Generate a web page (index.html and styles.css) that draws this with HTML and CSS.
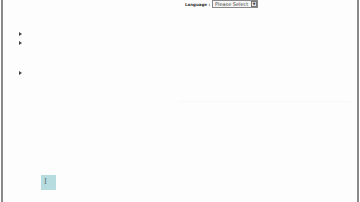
FILE: index.html
```html
<!DOCTYPE html>
<html lang="en">
  <head>
    <meta charset="UTF-8" />
    <meta name="viewport" content="width=device-width, initial-scale=1.0" />
    <title>Home</title>
    <link rel="stylesheet" href="styles.css">
  </head>
  <body>
    <div class="page">
      <div class="topbar">
        <label for="lang">Language :</label>
        <div class="select-wrap">
          <select id="lang">
            <option>Please Select</option>
          </select>
          <span class="arrow">&#9660;</span>
        </div>
      </div>
      <div class="content">
        <ul class="links">
          <li></li>
          <li></li>
        </ul>
        <ul class="links second">
          <li></li>
        </ul>
        <div class="rule"></div>
      </div>
      <div class="footer">
        <div class="cursor-box">I</div>
      </div>
    </div>
  </body>
</html>
```

FILE: styles.css
```css
* {
  margin: 0;
  padding: 0;
  box-sizing: border-box;
}

body {
  font-family: Verdana, "DejaVu Sans", sans-serif;
  background-color: #ffffff;
  width: 360px;
  height: 202px;
  overflow: hidden;
}

.page {
  margin: 0 1px;
  height: 202px;
  border-left: 2px solid #8a8a8a;
  border-right: 2px solid #8a8a8a;
  background-color: #fdfdfd;
  position: relative;
}

.topbar {
  display: flex;
  justify-content: flex-end;
  align-items: center;
  gap: 2px;
  height: 8px;
  padding-right: 99px;
}

.topbar label {
  font-size: 4px;
  font-weight: bold;
  color: #333;
}

.select-wrap {
  position: relative;
  width: 46px;
  height: 8px;
}

.select-wrap select {
  display: block;
  appearance: none;
  -webkit-appearance: none;
  width: 46px;
  height: 8px;
  font-size: 5px;
  font-family: "DejaVu Sans", sans-serif;
  color: #444;
  border: 1px solid #888;
  background-color: #f6f6f6;
  padding: 0 0 0 2px;
  line-height: 6px;
}

.arrow {
  position: absolute;
  right: 1px;
  top: 1px;
  width: 6px;
  height: 6px;
  border: 1px solid #777;
  background-color: #e8e8e8;
  color: #333;
  font-size: 3.5px;
  line-height: 4px;
  text-align: center;
  pointer-events: none;
}

.content {
  padding-left: 16px;
  padding-top: 23px;
}

.links {
  list-style: none;
}

.links li {
  height: 9px;
  position: relative;
}

.links li::before {
  content: "";
  position: absolute;
  left: 0;
  top: 1px;
  border-left: 3px solid #444;
  border-top: 2px solid transparent;
  border-bottom: 2px solid transparent;
}

.second {
  margin-top: 21px;
}

.rule {
  margin-top: 22px;
  margin-left: 160px;
  margin-right: 6px;
  height: 1px;
  background-color: #f8f8f8;
}

.footer {
  position: absolute;
  left: 38px;
  top: 175px;
}

.cursor-box {
  width: 15px;
  height: 15px;
  background-color: #b7dcdf;
  color: #6a7a7c;
  font-family: "Liberation Serif", serif;
  font-size: 9px;
  line-height: 13px;
  padding-left: 3px;
}
```
